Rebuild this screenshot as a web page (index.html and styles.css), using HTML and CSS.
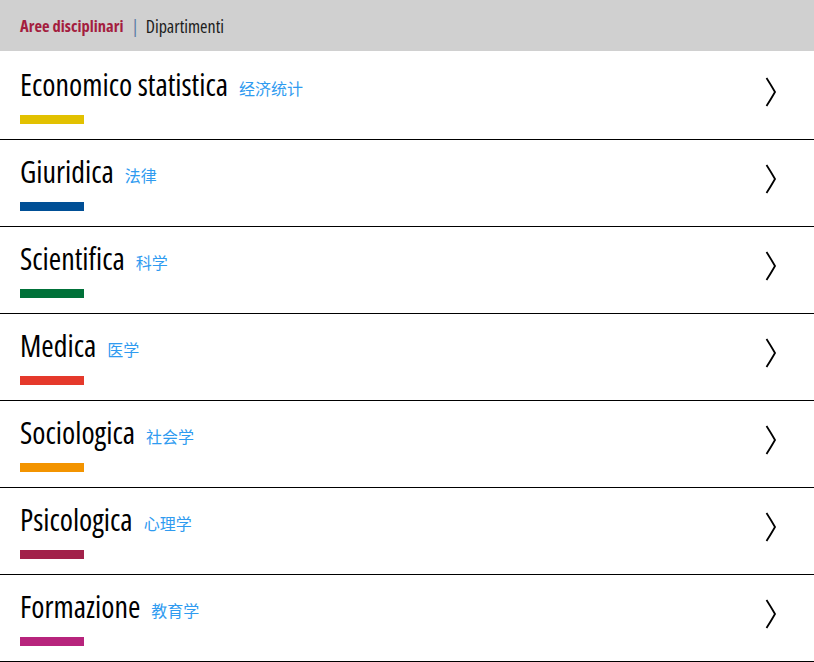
FILE: index.html
```html
<!DOCTYPE html>
<html lang="it">
<head>
<meta charset="utf-8">
<title>Aree disciplinari</title>
<link rel="stylesheet" href="styles.css">
</head>
<body>
<header class="tabs">
  <span class="tab tab-active">Aree disciplinari</span>
  <span class="sep">|</span>
  <span class="tab">Dipartimenti</span>
</header>
<ul class="list">
  <li class="row">
    <div class="label">
      <div class="title">Economico statistica<span class="zh">经济统计</span></div>
      <div class="bar bar-eco"></div>
    </div>
    <svg class="chev" width="12" height="30" viewBox="0 0 12 30"><path d="M1.5 1 Q6 8 10 15 Q6 22 1.5 29" fill="none" stroke="#000" stroke-width="1.8"/></svg>
  </li>
  <li class="row">
    <div class="label">
      <div class="title">Giuridica<span class="zh">法律</span></div>
      <div class="bar bar-giu"></div>
    </div>
    <svg class="chev" width="12" height="30" viewBox="0 0 12 30"><path d="M1.5 1 Q6 8 10 15 Q6 22 1.5 29" fill="none" stroke="#000" stroke-width="1.8"/></svg>
  </li>
  <li class="row">
    <div class="label">
      <div class="title">Scientifica<span class="zh">科学</span></div>
      <div class="bar bar-sci"></div>
    </div>
    <svg class="chev" width="12" height="30" viewBox="0 0 12 30"><path d="M1.5 1 Q6 8 10 15 Q6 22 1.5 29" fill="none" stroke="#000" stroke-width="1.8"/></svg>
  </li>
  <li class="row">
    <div class="label">
      <div class="title">Medica<span class="zh">医学</span></div>
      <div class="bar bar-med"></div>
    </div>
    <svg class="chev" width="12" height="30" viewBox="0 0 12 30"><path d="M1.5 1 Q6 8 10 15 Q6 22 1.5 29" fill="none" stroke="#000" stroke-width="1.8"/></svg>
  </li>
  <li class="row">
    <div class="label">
      <div class="title">Sociologica<span class="zh">社会学</span></div>
      <div class="bar bar-soc"></div>
    </div>
    <svg class="chev" width="12" height="30" viewBox="0 0 12 30"><path d="M1.5 1 Q6 8 10 15 Q6 22 1.5 29" fill="none" stroke="#000" stroke-width="1.8"/></svg>
  </li>
  <li class="row">
    <div class="label">
      <div class="title">Psicologica<span class="zh">心理学</span></div>
      <div class="bar bar-psi"></div>
    </div>
    <svg class="chev" width="12" height="30" viewBox="0 0 12 30"><path d="M1.5 1 Q6 8 10 15 Q6 22 1.5 29" fill="none" stroke="#000" stroke-width="1.8"/></svg>
  </li>
  <li class="row">
    <div class="label">
      <div class="title">Formazione<span class="zh">教育学</span></div>
      <div class="bar bar-for"></div>
    </div>
    <svg class="chev" width="12" height="30" viewBox="0 0 12 30"><path d="M1.5 1 Q6 8 10 15 Q6 22 1.5 29" fill="none" stroke="#000" stroke-width="1.8"/></svg>
  </li>
</ul>
</body>
</html>
```

FILE: styles.css
```css
html, body {
  margin: 0;
  padding: 0;
  background: #fff;
}
body {
  font-family: "Open Sans", "Noto Sans", sans-serif;
  font-stretch: 75%;
  color: #000;
}
.tabs {
  height: 51px;
  box-sizing: border-box;
  background: #d0d0d0;
  display: flex;
  align-items: center;
  padding: 1px 0 0 20px;
  font-size: 18px;
  line-height: 22px;
}
.tab {
  color: #1c1c1c;
  font-size: 18px;
}
.tab-active {
  color: #a41d3e;
  font-weight: bold;
  font-size: 16.5px;
}
.sep {
  color: #5b7fa6;
  margin: 0 7px 0 8px;
}
.list {
  list-style: none;
  margin: 2px 0 0 0;
  padding: 0;
}
.row {
  height: 87px;
  box-sizing: border-box;
  border-bottom: 1px solid #000;
  display: flex;
  align-items: flex-start;
  justify-content: space-between;
  padding: 16px 37px 0 20px;
}
.title {
  font-size: 30px;
  line-height: 32px;
  white-space: nowrap;
}
.zh {
  font-family: "Noto Sans CJK SC", sans-serif;
  font-stretch: normal;
  font-size: 16px;
  color: #2f9bf0;
  margin-left: 11px;
  position: relative;
  top: -1px;
}
.bar {
  width: 64px;
  height: 9px;
  margin-top: 10px;
}
.bar-eco { background: #e2c100; }
.bar-giu { background: #004f96; }
.bar-sci { background: #007139; }
.bar-med { background: #e5392b; }
.bar-soc { background: #f39400; }
.bar-psi { background: #a2214a; }
.bar-for { background: #b7247c; }
.chev {
  margin-top: 8px;
}
```
